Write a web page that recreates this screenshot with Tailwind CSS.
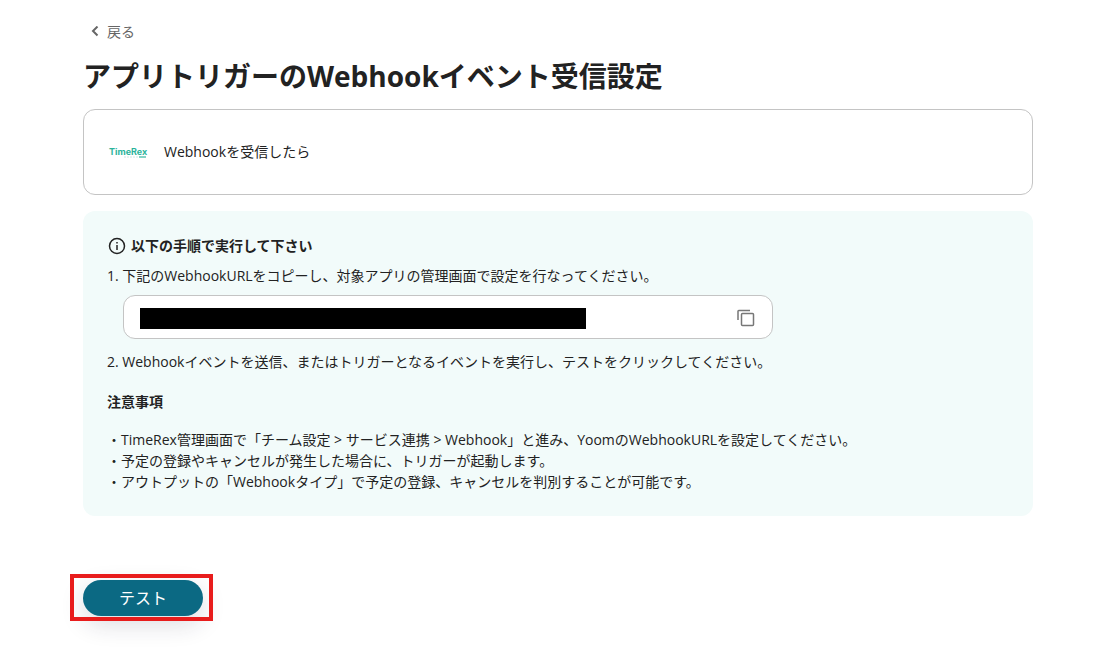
<!DOCTYPE html>
<html lang="ja">
<head>
    <meta charset="UTF-8">
    <meta name="viewport" content="width=device-width, initial-scale=1.0">
    <title>Webhookイベント受信設定</title>
    <script src="https://cdn.jsdelivr.net/npm/@tailwindcss/browser@4"></script>
</head>
<body class="min-h-screen bg-white font-['Open_Sans','Noto_Sans_CJK_JP',sans-serif] text-sm leading-[21px] text-[#222222]">
    <main class="pt-[21px] pr-[69px] pb-10 pl-[83px]">
        <!-- Back link -->
        <a href="#" class="ml-2 inline-flex items-center gap-2 text-[#666666]">
            <svg class="h-3 w-2" viewBox="0 0 8 12" fill="none" stroke="currentColor" stroke-width="2">
                <path d="M6.500 .5 L2 5 L6.500 9.500"/>
            </svg>
            <span>戻る</span>
        </a>

        <h1 class="mt-3 text-[28px] leading-[42px] font-bold">アプリトリガーのWebhookイベント受信設定</h1>

        <!-- Trigger -->
        <section class="mt-3 flex h-[86px] items-center gap-4 rounded-xl border border-[#c4c4c4] px-6">
            <svg class="h-10 w-10" viewBox="0 0 40 40" role="img" aria-label="TimeRex">
                <text x="1" y="23" font-family="Inter, sans-serif" font-size="9" font-weight="700" fill="#2bb39b">TimeRex</text>
                <path d="M16 25h14" stroke="#cfe6e2" stroke-width="1" stroke-dasharray="2 1"/>
                <path d="M31 25h7" stroke="#5cc4b3" stroke-width="1.500"/>
            </svg>
            <p>Webhookを受信したら</p>
        </section>

        <!-- Instructions -->
        <section class="mt-4 rounded-xl bg-[#f2fbfa] p-6">
            <h2 class="flex items-center gap-1 font-bold">
                <svg class="h-5 w-5" viewBox="0 0 20 20" fill="none" stroke="currentColor" stroke-width="1.500">
                    <circle cx="10" cy="11" r="7.500"/>
                    <path d="M10 10v5"/>
                    <path d="M10 7v1.500"/>
                </svg>
                以下の手順で実行して下さい
            </h2>
            <p class="mt-[9px]"><label for="webhook-url">1. 下記のWebhookURLをコピーし、対象アプリの管理画面で設定を行なってください。</label></p>
            <div class="mt-[9px] ml-4 flex h-11 max-w-[650px] items-end justify-between rounded-xl border border-[#c4c4c4] bg-white px-4 pb-[9px]">
                <input id="webhook-url" type="text" readonly class="h-[21px] w-[446px] bg-black text-black">
                <button type="button" aria-label="コピー" class="text-[#777777]">
                    <svg class="h-5 w-5" viewBox="0 0 20 20" fill="none" stroke="currentColor" stroke-width="1.500">
                        <rect x="5.500" y="4.500" width="12" height="12" rx="1"/>
                        <path d="M2 11V2.250a.75.75 0 0 1 .75-.75H14"/>
                    </svg>
                </button>
            </div>
            <p class="mt-3">2. Webhookイベントを送信、またはトリガーとなるイベントを実行し、テストをクリックしてください。</p>
            <h3 class="mt-[19px] font-bold">注意事項</h3>
            <p class="mt-[17px]">
                ・TimeRex管理画面で「チーム設定 &gt; サービス連携 &gt; Webhook」と進み、YoomのWebhookURLを設定してください。<br>
                ・予定の登録やキャンセルが発生した場合に、トリガーが起動します。<br>
                ・アウトプットの「Webhookタイプ」で予定の登録、キャンセルを判別することが可能です。
            </p>
        </section>

        <!-- Test button -->
        <div class="relative mt-16 w-[120px]">
            <button type="button" class="block h-9 w-full rounded-full bg-[#0b6983] text-base text-white shadow-[0_8px_24px_rgba(30,30,60,0.16)]">テスト</button>
            <div class="pointer-events-none absolute -top-[6px] -right-[10px] -bottom-[5px] -left-[13px] border-4 border-[#e81c1c]"></div>
        </div>
    </main>
</body>
</html>
